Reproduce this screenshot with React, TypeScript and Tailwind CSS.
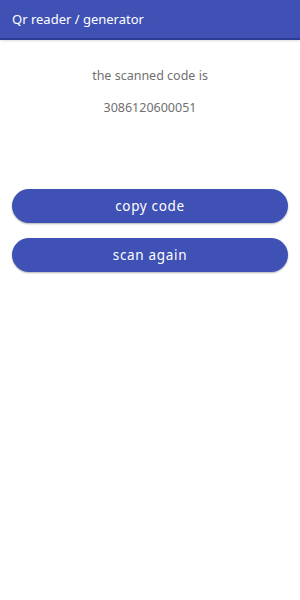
export default function App() {
  return (
    <div className="w-[300px] h-[600px] bg-white flex flex-col" style={{ fontFamily: '"Noto Sans", "Open Sans", sans-serif' }}>
      {/* toolbar */}
      <div className="h-[40px] bg-[#3f51b5] border-b-2 border-[#2c3b94] flex items-center px-3 pt-[2px] shadow-sm">
        <span className="text-white text-[13px]">Qr reader / generator</span>
      </div>

      <div className="flex flex-col items-center pt-[26px]">
        <p className="text-[12.5px] text-[#707070] leading-[20px]">the scanned code is</p>
        <p className="text-[12.5px] text-[#707070] leading-[20px] mt-[12px]">3086120600051</p>
      </div>

      <div className="flex flex-col gap-[15px] px-3 mt-[71px]">
        <button className="h-[34px] w-full rounded-full bg-[#3f51b5] text-white text-[13.5px] tracking-wider shadow-[0_1px_2px_rgba(0,0,0,0.3)]">
          copy code
        </button>
        <button className="h-[34px] w-full rounded-full bg-[#3f51b5] text-white text-[13.5px] tracking-wider shadow-[0_1px_2px_rgba(0,0,0,0.3)]">
          scan again
        </button>
      </div>
    </div>
  );
}
